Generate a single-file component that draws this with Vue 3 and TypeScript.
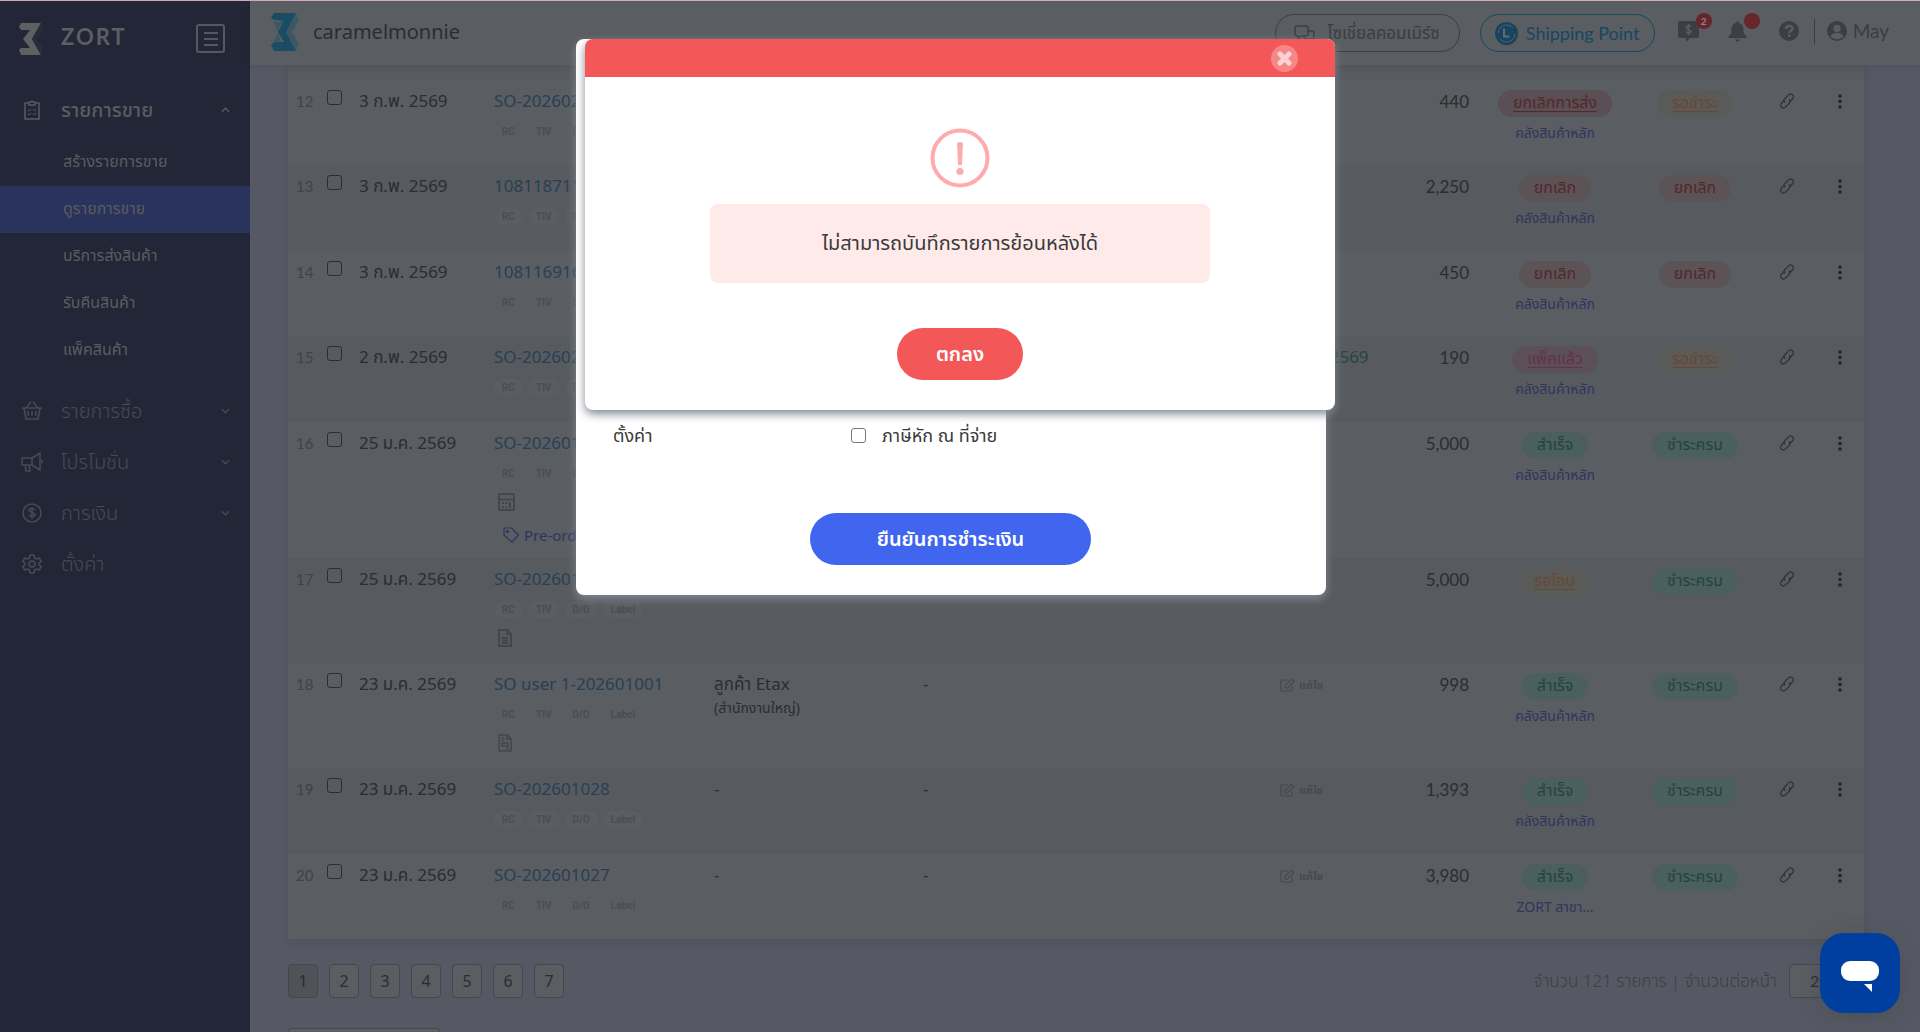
<script setup lang="ts">
import { ref } from 'vue'

type Tone = 'red' | 'rose' | 'pink' | 'amber' | 'green'

interface Order {
  no: number
  date: string
  code: string
  customer?: string
  branch?: string
  channel?: string
  shipDate?: string
  editable?: boolean
  amount: string
  status: string
  statusTone: Tone
  statusLink?: boolean
  warehouse?: string
  pay: string
  payTone: Tone
  payLink?: boolean
  icon?: 'calc' | 'doc' | 'invoice'
  tag?: string
  size?: 'tall' | 'mid'
}

const docTags = ['RC', 'TIV', 'D/O', 'Label']
const mainStore = 'คลังสินค้าหลัก'

const orders: Order[] = [
  { no: 12, date: '3 ก.พ. 2569', code: 'SO-202602003', amount: '440', status: 'ยกเลิกการส่ง', statusTone: 'rose', statusLink: true, warehouse: mainStore, pay: 'รอชำระ', payTone: 'amber', payLink: true },
  { no: 13, date: '3 ก.พ. 2569', code: '108118711402', amount: '2,250', status: 'ยกเลิก', statusTone: 'red', warehouse: mainStore, pay: 'ยกเลิก', payTone: 'red' },
  { no: 14, date: '3 ก.พ. 2569', code: '108116916305', amount: '450', status: 'ยกเลิก', statusTone: 'red', warehouse: mainStore, pay: 'ยกเลิก', payTone: 'red' },
  { no: 15, date: '2 ก.พ. 2569', code: 'SO-202602001', shipDate: '2 ก.พ. 2569', amount: '190', status: 'แพ็คแล้ว', statusTone: 'pink', statusLink: true, warehouse: mainStore, pay: 'รอชำระ', payTone: 'amber', payLink: true },
  { no: 16, date: '25 ม.ค. 2569', code: 'SO-202601030', amount: '5,000', status: 'สำเร็จ', statusTone: 'green', warehouse: mainStore, pay: 'ชำระครบ', payTone: 'green', icon: 'calc', tag: 'Pre-order', size: 'tall' },
  { no: 17, date: '25 ม.ค. 2569', code: 'SO-202601029', amount: '5,000', status: 'รอโอน', statusTone: 'amber', statusLink: true, pay: 'ชำระครบ', payTone: 'green', icon: 'doc', size: 'mid' },
  { no: 18, date: '23 ม.ค. 2569', code: 'SO user 1-202601001', customer: 'ลูกค้า Etax', branch: '(สำนักงานใหญ่)', channel: '-', editable: true, amount: '998', status: 'สำเร็จ', statusTone: 'green', warehouse: mainStore, pay: 'ชำระครบ', payTone: 'green', icon: 'invoice', size: 'mid' },
  { no: 19, date: '23 ม.ค. 2569', code: 'SO-202601028', customer: '-', channel: '-', editable: true, amount: '1,393', status: 'สำเร็จ', statusTone: 'green', warehouse: mainStore, pay: 'ชำระครบ', payTone: 'green' },
  { no: 20, date: '23 ม.ค. 2569', code: 'SO-202601027', customer: '-', channel: '-', editable: true, amount: '3,980', status: 'สำเร็จ', statusTone: 'green', warehouse: 'ZORT สาขา...', pay: 'ชำระครบ', payTone: 'green' },
]

const salesMenu = ['สร้างรายการขาย', 'ดูรายการขาย', 'บริการส่งสินค้า', 'รับคืนสินค้า', 'แพ็คสินค้า']
const activeMenu = ref(1)
const pages = [1, 2, 3, 4, 5, 6, 7]
const currentPage = ref(1)
const withholding = ref(false)
const perPage = ref('20')
</script>

<template>
  <div class="app">
    <aside class="sidebar">
      <div class="brand">
        <svg class="brand-logo" viewBox="0 0 24 32" aria-hidden="true">
          <path d="M2 0h20l-9 16 9 16H2l-2-5 2-2h9L4 16l7-9H2L0 4z" fill="#5f6062" />
          <path d="M22 0l2 7-6 9 6 9-2 7-9-16z" fill="#292c3c" />
        </svg>
        <span class="brand-name">ZORT</span>
        <button class="burger" type="button" aria-label="เมนู">
          <svg width="16" height="14" viewBox="0 0 16 14" stroke="#56585f" stroke-width="2"><path d="M1 1h14M1 7h14M1 13h14" /></svg>
        </button>
      </div>
      <nav>
        <a class="item open" href="#">
          <svg class="ico" viewBox="0 0 22 22" fill="none" stroke="currentColor" stroke-width="1.5"><path d="M7 4H4v16h14V4h-3" /><path d="M8 3h2l1-1 1 1h2v3H8z" /><path d="M7 11l1 1 2-2M7 15l1 1 2-2M12 11h3M12 15h3" stroke-width="1" /></svg>
          <span>รายการขาย</span>
          <svg class="caret" viewBox="0 0 10 6" fill="none" stroke="currentColor" stroke-width="1.5"><path d="M1 5l4-4 4 4" /></svg>
        </a>
        <ul class="sub">
          <li v-for="(label, i) in salesMenu" :key="label">
            <a href="#" :class="{ active: i === activeMenu }" @click.prevent="activeMenu = i">{{ label }}</a>
          </li>
        </ul>
        <a class="item" href="#">
          <svg class="ico" viewBox="0 0 22 22" fill="none" stroke="currentColor" stroke-width="1.5"><path d="M1 8h20M3 8l2 11h12l2-11M5 8l5-6M17 8l-5-6M7 11v5M11 11v5M15 11v5" /></svg>
          <span>รายการซื้อ</span>
          <svg class="caret" viewBox="0 0 10 6" fill="none" stroke="currentColor" stroke-width="1.5"><path d="M1 1l4 4 4-4" /></svg>
        </a>
        <a class="item" href="#">
          <svg class="ico" viewBox="0 0 22 22" fill="none" stroke="currentColor" stroke-width="1.5"><path d="M1 7h10v7H1zM11 7l8-5v17l-8-5M21 9v3M4 14l1 6h4l-1-6" /></svg>
          <span>โปรโมชั่น</span>
          <svg class="caret" viewBox="0 0 10 6" fill="none" stroke="currentColor" stroke-width="1.5"><path d="M1 1l4 4 4-4" /></svg>
        </a>
        <a class="item" href="#">
          <svg class="ico" viewBox="0 0 22 22" fill="none" stroke="currentColor" stroke-width="1.5"><circle cx="11" cy="11" r="9" /><path d="M14 8c-1-2-6-2-6 0 0 3 6 2 6 5 0 2-5 2-6 0M11 5v12" /></svg>
          <span>การเงิน</span>
          <svg class="caret" viewBox="0 0 10 6" fill="none" stroke="currentColor" stroke-width="1.5"><path d="M1 1l4 4 4-4" /></svg>
        </a>
        <a class="item" href="#">
          <svg class="ico" viewBox="0 0 22 22" fill="none" stroke="currentColor" stroke-width="1.5" stroke-linejoin="round"><path d="M9 2h4l.6 3 1.8 1 2.800-1 2 3.400-2.200 2v1.200l2.200 2-2 3.400-2.800-1-1.800 1L13 20H9l-.6-3-1.800-1-2.800 1-2-3.400 2.200-2v-1.200l-2.200-2 2-3.400 2.800 1 1.800-1z" /><circle cx="11" cy="11" r="3" /></svg>
          <span>ตั้งค่า</span>
        </a>
      </nav>
    </aside>

    <div class="main">
      <header class="topbar">
        <svg class="shop-logo" viewBox="0 0 28 38" aria-hidden="true">
          <path d="M3 0h22l3 8-7 11 7 11-3 8-10-19z" fill="#3c5866" />
          <path d="M3 0h22L15 19l10 19H3l-3-6 3-3h10L7 19l6-12H3L0 5z" fill="#1a4c64" />
          <path d="M2 8l8 2-3 9 3 9-8 2 5-11z" fill="#3c5866" />
        </svg>
        <h1>caramelmonnie</h1>
        <button class="pill social" type="button">
          <svg width="21" height="17" viewBox="0 0 21 17" fill="none" stroke="currentColor" stroke-width="1.500"><path d="M3 1h9q2 0 2 2v6q0 2-2 2H7l-3 3v-3H3q-2 0-2-2V3q0-2 2-2z" /><path d="M14 6h4q2 0 2 2v4q0 2-2 2h-1v2l-2-2h-3q-2 0-2-2v-1" /></svg>
          <span>โซเชี่ยลคอมเมิร์ซ</span>
        </button>
        <button class="pill shipping" type="button">
          <svg width="23" height="23" viewBox="0 0 23 23" fill="none"><circle cx="11.500" cy="11.500" r="11.500" fill="#19445e" /><circle cx="11.500" cy="11.500" r="8.500" stroke="#50636f" stroke-dasharray="20 7" /><path d="M9 6.500v8h5.500" stroke="#626b72" stroke-width="2" /></svg>
          <span>Shipping Point</span>
        </button>
        <div class="tools">
          <button class="tool chat-tool" type="button" aria-label="ข้อความ">
            <svg width="21" height="21" viewBox="0 0 21 21"><path d="M2 0h17q2 0 2 2v13q0 2-2 2h-7l-4 4v-4H2q-2 0-2-2V2q0-2 2-2z" fill="#3b3e43" /><path d="M13 6c-1-2-5-1.500-5 .5 0 2.500 5 1.500 5 4 0 2-4 2-5 0M10.500 3v11" fill="none" stroke="#5a5d61" stroke-width="1.500" /></svg>
            <span class="badge">2</span>
          </button>
          <button class="tool bell-tool" type="button" aria-label="แจ้งเตือน">
            <svg width="19" height="21" viewBox="0 0 19 21" fill="#3b3e43"><path d="M8.500 0h2v2c4 .5 5 4 5 7 0 4 1 5 3 6v2H.5v-2c2-1 3-2 3-6 0-3 1-6.500 5-7zM7 18.500h5q-.5 2-2.500 2T7 18.500z" /></svg>
            <span class="badge"></span>
          </button>
          <button class="tool" type="button" aria-label="ช่วยเหลือ">
            <svg width="20" height="20" viewBox="0 0 20 20"><circle cx="10" cy="10" r="10" fill="#3b3e43" /><path d="M7 8c0-4 6.500-4 6.500-.5 0 2.500-3.300 2-3.300 4.500M10.200 13.500v2.500" fill="none" stroke="#5a5d61" stroke-width="2.400" /></svg>
          </button>
          <span class="bar"></span>
          <a class="user" href="#">
            <svg width="20" height="20" viewBox="0 0 20 20"><circle cx="10" cy="10" r="10" fill="#3b3e43" /><circle cx="10" cy="7.500" r="3.700" fill="#5a5d61" /><path d="M3.500 15.500c2-5 11-5 13 0-3.500 3.500-9.500 3.500-13 0z" fill="#5a5d61" /></svg>
            <span>May</span>
          </a>
        </div>
      </header>

      <section class="content">
        <table class="orders">
          <colgroup>
            <col class="c-no"><col class="c-check"><col class="c-date"><col class="c-code"><col class="c-customer"><col><col class="c-ship"><col class="c-amount"><col class="c-status"><col class="c-pay"><col class="c-link"><col class="c-more">
          </colgroup>
          <tbody>
            <tr class="edge"><td colspan="12"></td></tr>
            <tr v-for="o in orders" :key="o.no" :class="[{ odd: o.no % 2 }, o.size]">
              <td class="no">{{ o.no }}</td>
              <td class="check"><input type="checkbox" :aria-label="o.code"></td>
              <td>{{ o.date }}</td>
              <td class="code">
                <a href="#">{{ o.code }}</a>
                <div class="tags"><span v-for="t in docTags" :key="t">{{ t }}</span></div>
                <svg v-if="o.icon === 'calc'" class="rowicon" viewBox="0 0 17 18" fill="none" stroke="#43464a" stroke-width="1.800"><rect x="1" y="1" width="15" height="16" rx="1" /><path d="M1 6.500h15" /><path d="M4 10h2M7.500 10h2M4 14h2M7.500 14h2M12 9v6" stroke-width="2" /></svg>
                <svg v-else-if="o.icon === 'doc'" class="rowicon" viewBox="0 0 17 18" fill="none" stroke="#43464a" stroke-width="1.800"><path d="M1 1h8.500L13 4.500V17H1zM9 1v4h4M4 9h6M4 11.500h6M4 14h6" /></svg>
                <svg v-else-if="o.icon === 'invoice'" class="rowicon" viewBox="0 0 17 18" fill="none" stroke="#43464a" stroke-width="1.500"><path d="M1 1h8.500L13 4.500V17H1zM9 1v4h4M3.500 4h3M3.500 6.500h3M4 9h6v3H4zM8 14.500h3" /></svg>
                <div v-if="o.tag" class="ordertag">
                  <svg width="16" height="16" viewBox="0 0 16 16" fill="none" stroke="currentColor" stroke-width="1.200"><path d="M1 1h7.500l7 7-6.500 7-8-7z" stroke-linejoin="round" /><circle cx="4.500" cy="4.500" r="1" fill="currentColor" /></svg>
                  <span>{{ o.tag }}</span>
                </div>
              </td>
              <td>{{ o.customer }}<div v-if="o.branch" class="branch">{{ o.branch }}</div></td>
              <td>{{ o.channel }}</td>
              <td>
                <span v-if="o.shipDate" class="shipdate">{{ o.shipDate }}</span>
                <button v-if="o.editable" class="edit" type="button">
                  <svg width="15" height="14" viewBox="0 0 15 14" fill="none" stroke="currentColor" stroke-width="1.200"><path d="M8 2H2Q1 2 1 3v9q0 1 1 1h9q1 0 1-1V8" /><path d="M5 7.500l6.500-6.500 2.500 2.500L7.500 10H5z" /></svg>
                  <span>แก้ไข</span>
                </button>
              </td>
              <td class="amount">{{ o.amount }}</td>
              <td class="mid-cell">
                <span class="state" :class="[o.statusTone, { linked: o.statusLink }]">{{ o.status }}</span>
                <a v-if="o.warehouse" class="store" href="#">{{ o.warehouse }}</a>
              </td>
              <td class="mid-cell"><span class="state" :class="[o.payTone, { linked: o.payLink }]">{{ o.pay }}</span></td>
              <td class="act">
                <svg width="16" height="16" viewBox="0 0 16 16" fill="none" stroke="#2f3236" stroke-width="1.200"><path d="M6 9.500c-1.500-1.500-1-3 0-4l3.300-3.300c3-3 6.500.5 4.500 3.300L10.500 9" /><path d="M10 6.500c1.500 1.500 1 3 0 4l-3.300 3.300c-3 3-6.500-.5-4.500-3.300L5.500 7" /></svg>
              </td>
              <td class="act more">
                <svg width="4" height="16" viewBox="0 0 4 16" fill="#222529"><circle cx="2" cy="3" r="1.800" /><circle cx="2" cy="8.500" r="1.800" /><circle cx="2" cy="14" r="1.800" /></svg>
              </td>
            </tr>
          </tbody>
        </table>

        <div class="pager">
          <div class="pages">
            <button v-for="p in pages" :key="p" type="button" :class="{ current: p === currentPage }" @click="currentPage = p">{{ p }}</button>
          </div>
          <div class="perpage">
            <label for="per">จำนวน 121 รายการ | จำนวนต่อหน้า</label>
            <select id="per" v-model="perPage"><option>20</option><option>50</option></select>
          </div>
        </div>
        <button class="bulk" type="button" aria-label="ดำเนินการ"></button>
      </section>
    </div>

    <div class="layer under">
      <section class="payment" role="dialog" aria-label="ยืนยันการชำระเงิน">
        <div class="field">
          <span class="field-name">ตั้งค่า</span>
          <input id="wht" v-model="withholding" type="checkbox">
          <label for="wht">ภาษีหัก ณ ที่จ่าย</label>
        </div>
        <button class="confirm" type="button">ยืนยันการชำระเงิน</button>
      </section>
    </div>
    <div class="layer">
      <section class="alert" role="alertdialog" aria-labelledby="alert-text">
        <div class="alert-head">
          <button class="close" type="button" aria-label="ปิด">
            <svg width="15" height="15" viewBox="0 0 15 15" stroke="#fbd3d3" stroke-width="5" stroke-linecap="round"><path d="M3 3l9 9M12 3l-9 9" /></svg>
          </button>
        </div>
        <svg class="warn" viewBox="0 0 60 60"><circle cx="30" cy="30" r="27.500" fill="none" stroke="#ffabab" stroke-width="4" /><path d="M27 15q3-2 6 0l-1 22h-4z" fill="#ffabab" /><circle cx="30" cy="43.500" r="3.600" fill="#ffabab" /></svg>
        <p id="alert-text">ไม่สามารถบันทึกรายการย้อนหลังได้</p>
        <button class="ok" type="button">ตกลง</button>
      </section>
    </div>

    <button class="chat" type="button" aria-label="แชท">
      <svg width="38" height="32" viewBox="0 0 38 32" fill="#fff"><rect width="38" height="20" rx="9" /><path d="M23 23h8v8z" /></svg>
    </button>
  </div>
</template>

<style>
html, body { margin: 0; background: #565963; }
</style>

<style scoped>
* { box-sizing: border-box; }
.app {
  position: relative;
  display: flex;
  height: 100vh;
  overflow: hidden;
  border-top: 1px solid #cfadb4;
  background: #565963;
  color: #2a2d31;
  font: 17px/24px "Noto Sans", "Noto Sans Thai", sans-serif;
}
a { color: inherit; text-decoration: none; }
button { padding: 0; border: 0; background: none; color: inherit; font: inherit; }
input[type="checkbox"] { appearance: none; width: 15px; height: 15px; margin: 0; border: 1px solid #2a2d31; border-radius: 3px; }

.sidebar { flex: none; width: 250px; background: #232637; color: #484b53; }
.brand { display: flex; align-items: center; height: 80px; padding: 0 25px 5px 19px; }
.brand-logo { width: 24px; height: 32px; }
.brand-name { flex: 1; margin-left: 18px; padding-bottom: 4px; color: #5c5e62; font: bold 22px/26px Lato, sans-serif; letter-spacing: 2px; }
.burger { display: flex; align-items: center; justify-content: center; width: 29px; height: 29px; border: 2px solid #56585f; border-radius: 3px; }
.item { display: flex; align-items: center; height: 51px; padding: 0 20px 0 21px; font-size: 20px; font-weight: 300; }
.item span { flex: 1; margin-left: 18px; }
.item.open { height: 58px; color: #5a5c60; font-weight: 500; }
.ico { width: 22px; height: 22px; }
.caret { width: 9px; height: 6px; }
.sub { margin: 0 0 11px; padding: 0; list-style: none; color: #5a5c60; font-size: 16px; line-height: 44px; }
.sub li a { display: block; height: 47px; padding-left: 63px; }
.sub .active { background: #29335b; }

.main { display: flex; flex: 1; flex-direction: column; min-width: 0; }
.topbar { position: relative; flex: none; display: flex; align-items: center; height: 64px; padding: 0 31px 12px 21px; background: #5a5d61; box-shadow: 0 2px 6px rgba(40, 43, 50, .1); }
.shop-logo { width: 28px; height: 38px; margin-top: 10px; }
h1 { flex: 1; margin: 10px 0 0 14px; font: 20px/28px "Noto Sans", sans-serif; }
.pill { display: flex; align-items: center; justify-content: center; height: 38px; margin-top: 12px; border: 1px solid #3b3e43; border-radius: 19px; white-space: nowrap; }
.social { gap: 12px; width: 185px; color: #3b3e43; font-size: 17px; }
.shipping { gap: 8px; width: 175px; margin-left: 20px; border-color: #164763; color: #164763; font: 18px/24px Lato, sans-serif; }
.tools { display: flex; align-items: center; margin: 8px 0 0 23px; color: #3b3e43; }
.tool { position: relative; display: flex; }
.bell-tool { margin: 0 32px 0 29px; }
.badge { position: absolute; top: -8px; right: -13px; width: 16px; height: 16px; border-radius: 8px; background: #66262b; color: #87898c; font: bold 10px/16px Lato, sans-serif; text-align: center; }
.bar { width: 1px; height: 25px; margin: 0 12px 0 15px; background: #3b3e43; }
.user { display: flex; align-items: center; gap: 6px; font: 19px/24px Lato, sans-serif; }

.content { padding: 0 56px 0 38px; }
.orders { width: 100%; table-layout: fixed; border-collapse: collapse; background: #5a5d61; box-shadow: 0 2px 8px rgba(40, 43, 50, .15); }
.orders td { padding: 9px 5px 0; vertical-align: top; white-space: nowrap; }
.orders tr { height: 85px; }
.orders .odd { height: 86px; background: #575a5e; }
.orders .edge { height: 15px; background: #575a5e; }
.orders .edge td { padding: 0; }
.orders .tall { height: 136px; }
.orders .mid { height: 105px; }
.c-no { width: 34px; }
.c-check { width: 32px; }
.c-date { width: 135px; }
.c-code { width: 220px; }
.c-customer { width: 209px; }
.c-ship { width: 115px; }
.c-amount { width: 84px; }
.c-status { width: 162px; }
.c-pay { width: 118px; }
.c-link { width: 66px; }
.c-more { width: 44px; }
.orders td.no { padding-left: 8px; color: #404347; font: 15px/24px Lato, sans-serif; }
.orders td.check { padding-top: 10px; line-height: 12px; }
.check input { vertical-align: top; }
.code { color: #293f55; }
.tags { display: flex; gap: 5px; margin-top: 10px; color: #4b4e52; font: bold 10px/17px Roboto, sans-serif; }
.tags span { padding: 0 8px; border-radius: 9px; background: #5a5d61; }
.rowicon { display: block; width: 17px; height: 18px; margin: 11px 0 0 4px; }
.ordertag { display: flex; gap: 5px; margin: 12px 0 0 9px; color: #2f3560; font-size: 15px; }
.ordertag svg { margin-top: 4px; }
.branch { font-size: 14px; }
.shipdate { color: #27463f; }
.edit { display: flex; align-items: center; gap: 4px; margin-top: 2px; color: #474a4e; font-size: 11px; font-weight: bold; line-height: 22px; }
.orders td.amount { font: 17px/26px Lato, sans-serif; text-align: right; }
.orders td.mid-cell { text-align: center; }
.state { display: inline-block; height: 27px; margin-top: 1px; padding: 0 15px; border-radius: 14px; font-size: 16px; line-height: 24px; vertical-align: top; }
.linked { text-decoration: underline; text-underline-offset: 3px; }
.red { background: #5c5356; color: #54272d; }
.rose { background: #594f54; color: #54272d; }
.pink { background: #5b5057; color: #662f4b; }
.amber { background: #5a5b59; color: #6b4730; }
.green { background: #4b5f5e; color: #22443f; }
.store { display: block; margin-top: 4px; color: #2f3560; font-size: 14px; }
.orders td.act { padding-top: 13px; line-height: 0; text-align: center; }
.orders td.more { padding-right: 9px; }

.pager { display: flex; justify-content: space-between; height: 34px; margin-top: 25px; }
.pages { display: flex; gap: 11px; }
.pages button { width: 30px; height: 34px; border: 1px solid #44474b; border-radius: 4px; background: #5a5d61; font: 16px/24px "Noto Sans", sans-serif; }
.pages .current { background: #4f5256; }
.perpage { display: flex; align-items: center; gap: 12px; color: #3b3e43; font-size: 17px; font-weight: 300; }
.perpage select { width: 75px; height: 34px; padding: 0 20px; appearance: none; border: 1px solid #44474b; border-radius: 4px; background: #5a5d61; color: #2a2d31; font: 16px/24px Lato, sans-serif; }
.bulk { display: block; width: 152px; height: 34px; margin-top: 30px; border: 1px solid #44474b; border-radius: 4px; background: #5a5d61; }

.layer { position: absolute; inset: 0; display: flex; justify-content: center; align-items: flex-start; padding-top: 38px; pointer-events: none; }
.layer.under { padding-right: 18px; }
.layer section { width: 750px; border-radius: 8px; background: #fff; color: #3a3a3a; box-shadow: 0 4px 10px #808994; pointer-events: auto; }
.payment { padding: 380px 0 30px; }
.field { display: flex; align-items: center; height: 32px; padding-left: 37px; font-size: 18px; }
.field input { border-color: #767676; }
.field-name { width: 238px; }
.field label { margin-left: 16px; }
.confirm, .ok { display: block; height: 52px; border-radius: 26px; color: #fff; font-size: 20px; font-weight: 600; }
.confirm { width: 281px; margin: 62px auto 0 234px; background: #4066ef; }
.alert { padding-bottom: 30px; overflow: hidden; }
.alert-head { display: flex; justify-content: flex-end; align-items: center; height: 38px; padding-right: 37px; background: #f35757; }
.close { display: flex; align-items: center; justify-content: center; width: 27px; height: 27px; border-radius: 50%; background: #f68787; }
.warn { display: block; width: 60px; height: 60px; margin: 51px auto 16px; }
.alert p { width: 500px; margin: 0 auto 45px; padding: 25px 0 27px; border-radius: 8px; background: #ffeaea; font-size: 20px; line-height: 27px; text-align: center; }
.ok { width: 126px; margin: 0 auto; background: #f35757; }
.chat { position: absolute; right: 20px; bottom: 19px; display: flex; align-items: center; justify-content: center; width: 80px; height: 80px; padding-top: 7px; border-radius: 24px; background: #003f9f; box-shadow: 0 4px 20px rgba(60, 68, 72, .4); }
</style>
